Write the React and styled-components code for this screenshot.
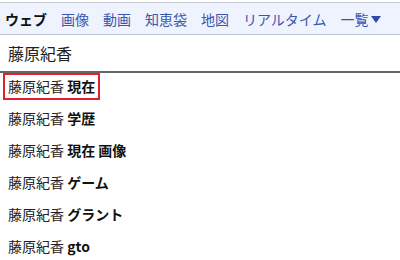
import React from 'react'
import styled, {createGlobalStyle} from 'styled-components'

const GlobalStyle = createGlobalStyle`
   html, body {
      margin:0;
      padding:0;
      background:#fff;
      font-family:"Noto Sans CJK JP", "Noto Sans", sans-serif;
   }
`

const Page = styled.div`
   width:400px;
   height:260px;
   overflow:hidden;
   padding-top:2px;
   box-sizing:border-box;
`

const Tabs = styled.nav`
   display:flex;
   align-items:center;
   height:31px;
   padding-left:5px;
   gap:14px;
   background:#eef3fd;
   border-top:1px solid #c6cbd6;
   border-bottom:1px solid #bfc4cc;
`

const Tab = styled.span`
   font-size:14px;
   line-height:20px;
   color:${p => (p.active ? '#111' : '#3a56b0')};
   font-weight:${p => (p.active ? 700 : 400)};
   white-space:nowrap;
`

const Caret = styled.span`
   display:inline-block;
   width:0;
   height:0;
   margin-left:2px;
   vertical-align:2px;
   border-left:5px solid transparent;
   border-right:5px solid transparent;
   border-top:7px solid #2d4aa6;
`

const Query = styled.div`
   height:36px;
   padding-left:8px;
   display:flex;
   align-items:center;
   font-size:16px;
   color:#222;
   border-bottom:2px solid #666;
`

const List = styled.ul`
   list-style:none;
   margin:0;
   padding:0;
`

const Item = styled.li`
   height:32px;
   display:flex;
   align-items:flex-start;
   padding-left:3px;
`

const Label = styled.span`
   font-size:14px;
   color:#222;
   padding:2px 3px 2px 3px;
   border:2px solid ${p => (p.selected ? '#e0202a' : 'transparent')};
   line-height:19px;
`

const Extra = styled.b`
   font-weight:700;
   color:#111;
`

const tabs = ['画像', '動画', '知恵袋', '地図', 'リアルタイム']

const suggestions = ['現在', '学歴', '現在 画像', 'ゲーム', 'グラント', 'gto']

const App = () => (
   <Page>
      <GlobalStyle />
      <Tabs>
         <Tab active>ウェブ</Tab>
         {tabs.map(t => <Tab key={t}>{t}</Tab>)}
         <Tab>一覧<Caret /></Tab>
      </Tabs>
      <Query>藤原紀香</Query>
      <List>
         {suggestions.map((s, i) => (
            <Item key={s}>
               <Label selected={i === 0}>藤原紀香 <Extra>{s}</Extra></Label>
            </Item>
         ))}
      </List>
   </Page>
)

export default App
